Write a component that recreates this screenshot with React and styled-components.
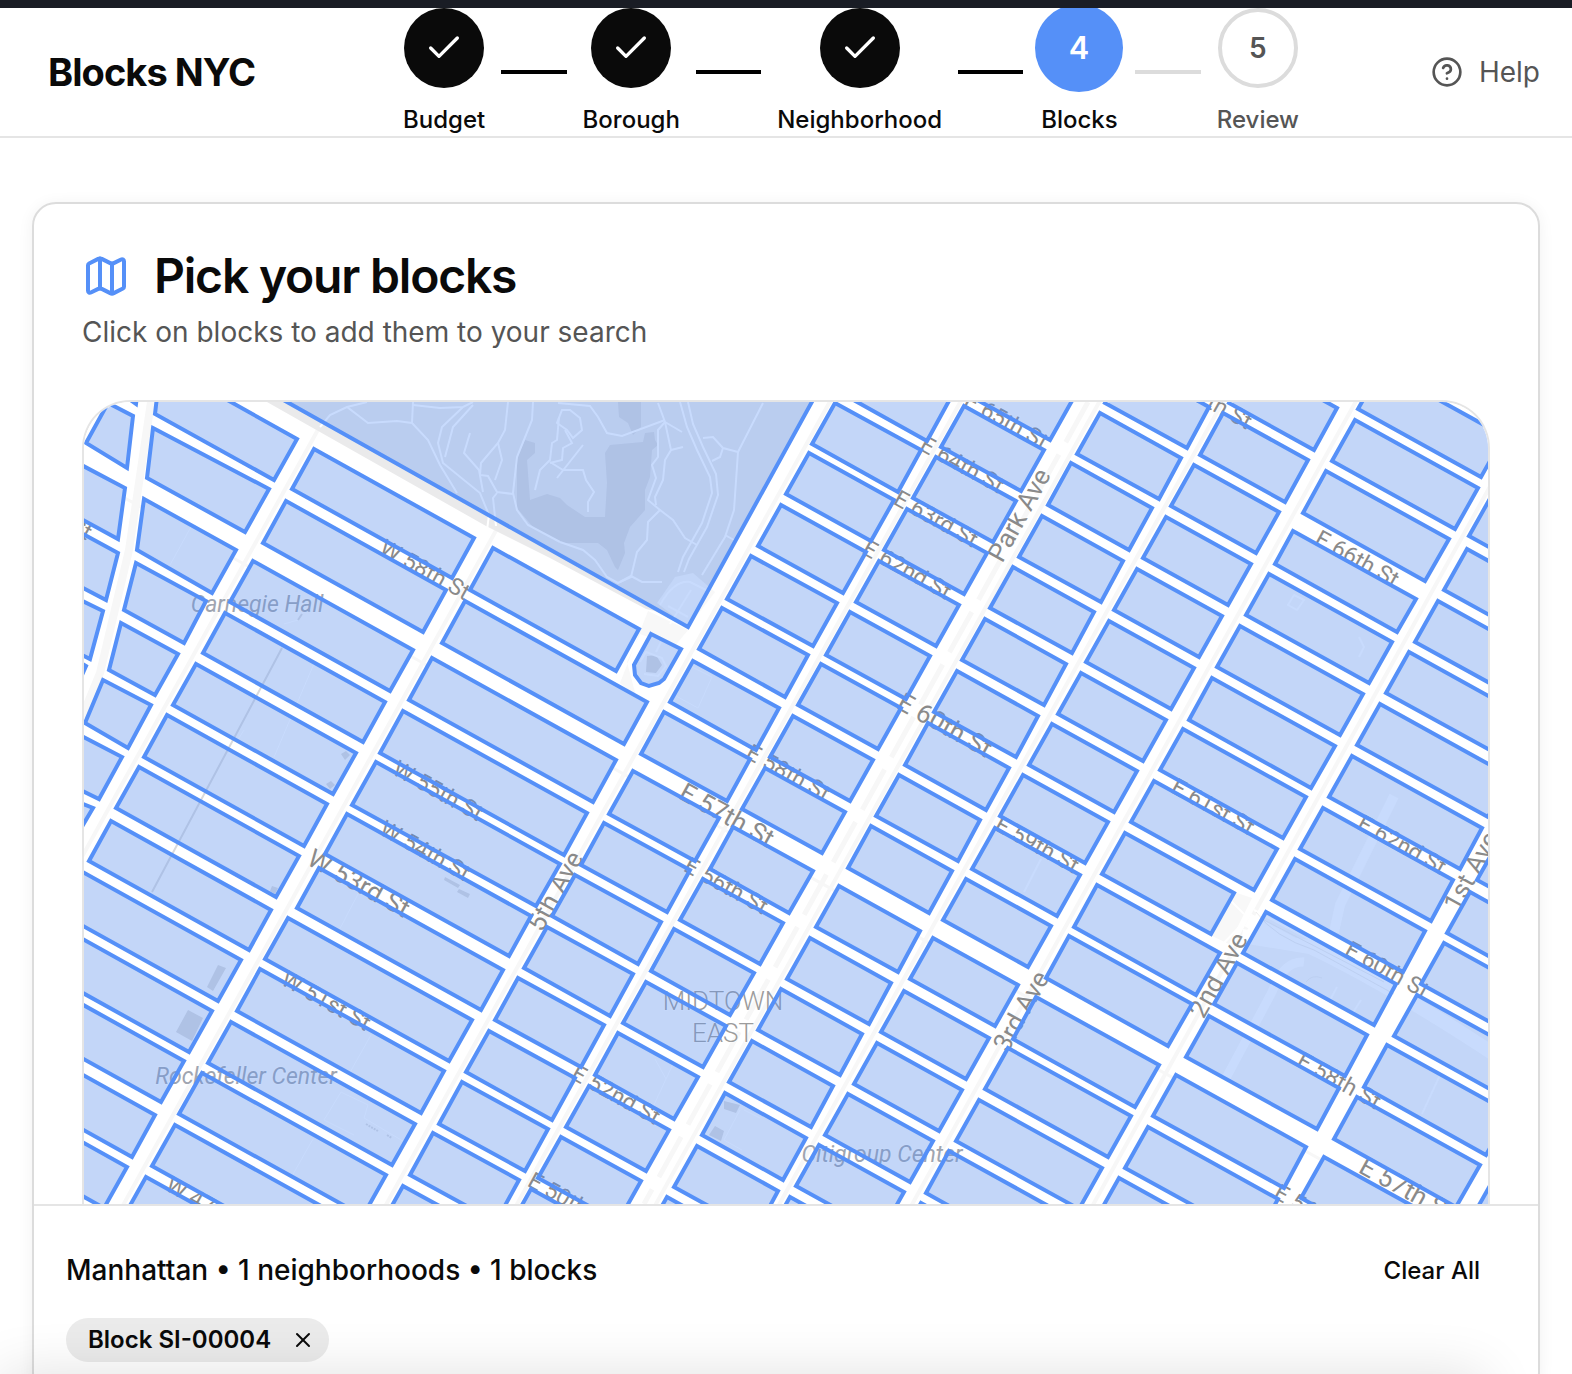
import React, { useState } from "react";
import styled, { createGlobalStyle } from "styled-components";
import { Check, CircleHelp, Map as MapIcon, X } from "lucide-react";

const color = {
  ink: "#0a0a0a",
  muted: "#555555",
  blue: "#5590f8",
  line: "#e5e5e5",
  edge: "#dcdcdc",
  chip: "#ebebeb",
};

const GlobalStyle = createGlobalStyle`
  *, *::before, *::after { box-sizing: border-box; }
  body {
    margin: 0;
    background: #fff;
    color: ${color.ink};
    font-family: Inter, "Liberation Sans", sans-serif;
    -webkit-font-smoothing: antialiased;
  }
  button { font: inherit; color: inherit; border: 0; background: none; cursor: pointer; }
`;

const Page = styled.div`
  height: 100vh;
  overflow: hidden;
  border-top: 8px solid #1a1d25;
`;

const Header = styled.header`
  display: flex;
  align-items: center;
  justify-content: space-between;
  height: 130px;
  padding: 0 32px;
  overflow: hidden;
  border-bottom: 2px solid ${color.line};
`;

const Brand = styled.a`
  padding: 0 16px;
  color: inherit;
  font-size: 38px;
  font-weight: 700;
  line-height: 48px;
  letter-spacing: -0.025em;
  text-decoration: none;
  white-space: nowrap;
`;

const Stepper = styled.ol`
  display: flex;
  align-items: center;
  gap: 16px;
  width: 896px;
  margin: 0;
  padding: 0;
  list-style: none;
`;

const StepItem = styled.li`
  display: flex;
  flex-direction: column;
  align-items: center;
  gap: 16px;
  color: ${(p) => (p.$state === "todo" ? color.muted : color.ink)};
`;

const StepDot = styled.span`
  display: grid;
  place-items: center;
  width: 80px;
  height: 80px;
  border-radius: 50%;
  border: ${(p) => (p.$state === "todo" ? `4px solid ${color.edge}` : "0")};
  background: ${(p) => ({ done: color.ink, current: color.blue, todo: "#fff" })[p.$state]};
  color: ${(p) => (p.$state === "todo" ? color.muted : "#fff")};
  transform: ${(p) => (p.$state === "current" ? "scale(1.1)" : "none")};
  font-size: 28px;
  font-weight: 600;
`;

const StepLabel = styled.span`
  font-size: 24px;
  font-weight: 500;
  line-height: 32px;
`;

const Connector = styled.li`
  flex: 1;
  height: 4px;
  background: ${(p) => (p.$done ? "#000" : color.edge)};
`;

const HelpButton = styled.button`
  display: flex;
  align-items: center;
  gap: 16px;
  padding: 0;
  color: ${color.muted};
  font-size: 28px;
  line-height: 40px;
`;

const Main = styled.main`
  padding: 64px 32px;
`;

const Card = styled.section`
  border: 2px solid ${color.edge};
  border-radius: 24px;
  background: #fff;
  box-shadow: 0 2px 16px rgba(0, 0, 0, 0.06);
`;

const CardBody = styled.div`
  padding: 48px 48px 0;
`;

const TitleRow = styled.div`
  display: flex;
  align-items: center;
  gap: 24px;
  svg { color: ${color.blue}; }
`;

const Title = styled.h1`
  margin: 0;
  font-size: 48px;
  font-weight: 600;
  line-height: 48px;
  letter-spacing: -0.025em;
`;

const Subtitle = styled.p`
  margin: 12px 0 48px;
  color: ${color.muted};
  font-size: 28px;
  line-height: 40px;
`;

const MapFrame = styled.div`
  overflow: hidden;
  border: 2px solid ${color.line};
  border-bottom: 0;
  border-radius: 48px 48px 0 0;
`;

const MapSvg = styled.svg`
  display: block;
  width: 100%;
  aspect-ratio: 1404 / 802;
`;

const MapLabel = styled.text`
  font-family: Roboto, "Liberation Sans", sans-serif;
  font-size: ${(p) => p.$size || 23}px;
  font-style: ${(p) => (p.$place ? "italic" : "normal")};
  font-weight: ${(p) => (p.$area ? 300 : 400)};
  fill: ${(p) => (p.$area ? "#9c9c9c" : p.$place ? "#a0a5b0" : "#8a8a8a")};
  stroke: rgba(255, 255, 255, 0.5);
  stroke-width: 2px;
  paint-order: stroke;
  text-anchor: middle;
  dominant-baseline: central;
`;

const Summary = styled.footer`
  display: flex;
  flex-direction: column;
  gap: 16px;
  padding: 32px;
  border-top: 2px solid ${color.line};
`;

const SummaryRow = styled.div`
  display: flex;
  align-items: center;
  justify-content: space-between;
  height: 64px;
`;

const SummaryText = styled.p`
  margin: 0;
  font-size: 28px;
  font-weight: 500;
  line-height: 40px;
`;

const ClearButton = styled.button`
  height: 64px;
  padding: 0 26px;
  font-size: 24px;
  font-weight: 500;
`;

const ChipList = styled.div`
  display: flex;
  gap: 16px;
  min-height: 44px;
`;

const Chip = styled.span`
  display: inline-flex;
  align-items: center;
  gap: 20px;
  height: 44px;
  padding: 0 14px 0 22px;
  border-radius: 22px;
  background: ${color.chip};
  font-size: 24px;
  font-weight: 600;
  line-height: 32px;
`;

const ChipRemove = styled.button`
  display: grid;
  place-items: center;
  padding: 0;
`;

const BottomBar = styled.div`
  position: fixed;
  top: 100%;
  left: 0;
  right: 88px;
  height: 96px;
  box-shadow: 0 0 56px rgba(0, 0, 0, 0.12);
  pointer-events: none;
`;

/* City blocks: each column lies between two avenues; a row is the block's
   northern corner with its depth, and a width where it differs. */
const COS = Math.cos((28.93 * Math.PI) / 180);
const SIN = Math.sin((28.93 * Math.PI) / 180);

const COLUMNS = [
  { width: 183, rows: [[230, 47, 46], [202, 99, 48], [169, 159], [141, 211, 46], [112, 262], [83, 313, 48], [55, 365], [27, 419, 46], [-3, 469], [-32, 520], [-60, 570], [-89, 624, 48], [-117, 676]] },
  { width: 210, rows: [[409, 146, 48, 167], [381, 199, 48, 208], [348, 256, 48], [319, 309, 48], [292, 360, 49], [263, 412, 46], [235, 466, 46], [204, 516], [176, 567, 48], [147, 620], [118, 671], [91, 723], [62, 775]] },
  { width: 98, rows: [[780, -50], [751, 1], [725, 51, 47, 97], [697, 103, 47, 97], [667, 154, 49], [638, 206], [609, 259], [580, 310, 48], [549, 369, 49], [520, 421, 48], [491, 473], [463, 525], [434, 576, 48], [405, 629], [378, 680, 48], [349, 731, 48], [319, 784]] },
  { width: 91, rows: [[909, -47], [880, 4], [852, 55], [823, 107], [795, 159], [766, 210, 49], [737, 262], [709, 314], [681, 366], [649, 425, 48], [619, 477], [590, 527, 48], [562, 580], [534, 631, 48], [505, 684], [477, 735], [447, 787]] },
  { width: 93, rows: [[1044, -40], [1016, 11], [987, 61, 48], [958, 114], [929, 165], [901, 217], [873, 269], [844, 321, 48], [815, 373], [787, 424, 48], [755, 484], [726, 536], [697, 587], [668, 639], [641, 691, 48], [613, 744], [583, 795]] },
  { width: 97, rows: [[1168, -41, 48], [1139, 11, 48], [1110, 63], [1082, 115], [1053, 167], [1025, 219], [997, 271], [968, 322], [939, 373], [911, 426], [882, 477], [849, 536], [820, 589], [793, 641], [764, 692], [735, 743], [706, 795]] },
  { width: 140, rows: [[1297, -34], [1271, 18], [1242, 69, 48], [1209, 129, 38], [1185, 172], [1156, 224], [1128, 276, 48], [1099, 327], [1070, 379], [1041, 431, 47, 124], [1013, 483, 48], [985, 534, 48], [952, 595, 48], [924, 646], [895, 698], [865, 749, 48], [837, 801]] },
  { width: 149, rows: [[1408, 93], [1383, 147], [1354, 199], [1325, 250], [1296, 302], [1268, 354], [1239, 406], [1211, 457], [1182, 510], [1153, 561], [1125, 614], [1092, 673], [1064, 725], [1035, 776]] },
  { width: 140, rows: [[1416, 437], [1386, 490], [1360, 541], [1333, 593], [1303, 643, 48], [1273, 695, 48], [1240, 755], [1413, 771]] },
];

const EDGE_BLOCKS = [
  "73,-5 138,-5 213,37 190,78 71,12",
  "69,26 185,87 161,130 63,76",
  "60,97 152,148 128,191 53,148",
  "52,161 122,199 100,241 40,208",
  "37,221 94,252 71,293 25,268",
  "19,278 67,303 44,346 1,321",
  "-14,328 38,355 15,397 -14,383",
  "-11,398 9,406 -1,423 -11,418",
  "24,1 49,14 43,66 2,41",
  "-14,57 41,86 34,137 -14,111",
  "-14,125 34,151 22,198 -14,179",
  "-14,193 19,209 6,257 -14,247",
  "-14,255 2,264 -6,282 -14,280",
  "30,-14 54,-14 52,2",
  "203,0 180,-13 735,-13 604,225",
  "567,232 597,247 580,277 575,281 565,284 557,281 551,273 550,263",
];

const blockPoints = (x, y, depth, width) => {
  const wx = width * COS;
  const wy = width * SIN;
  const dx = -depth * SIN;
  const dy = depth * COS;
  return [[x, y], [x + wx, y + wy], [x + wx + dx, y + wy + dy], [x + dx, y + dy]]
    .map((pt) => pt.map((n) => Math.round(n)).join(","))
    .join(" ");
};

const BLOCKS = [
  ...COLUMNS.flatMap((col) =>
    col.rows.map(([x, y, depth = 47, width = col.width]) => blockPoints(x, y, depth, width))
  ),
  ...EDGE_BLOCKS,
];

const STREETS = [
  ["W 58th St", 341, 168], ["E 65th St", 922, 19], ["E 64th St", 878, 63], ["E 63rd St", 852, 117],
  ["E 62nd St", 823, 168], ["E 67th St", 1126, -1], ["E 66th St", 1273, 157], ["E 61st St", 1129, 405],
  ["E 62nd St", 1318, 443], ["E 60th St", 1303, 568], ["E 58th St", 1255, 679], ["E 57th St", 1323, 787, 26],
  ["E 56th St", 1232, 811], ["E 59th St", 953, 443], ["E 60th St", 861, 323, 26], ["E 58th St", 704, 371],
  ["E 57th St", 643, 413, 26], ["E 56th St", 642, 484], ["E 52nd St", 532, 693], ["E 50th St", 486, 799],
  ["W 55th St", 354, 389], ["W 54th St", 341, 449], ["W 53rd St", 275, 481, 26], ["W 51st St", 242, 599],
  ["W 47th St", 127, 805], ["W 56th St", -37, 108],
];

const AVENUES = [
  ["Park Ave", 935, 113], ["5th Ave", 471, 489], ["3rd Ave", 937, 609], ["2nd Ave", 1134, 573], ["1st Ave", 1387, 469],
];

const PARK_PATHS = [
  "M596,0 L603,25 613,48 626,75 628,91 618,121 599,155 594,170",
  "M604,0 L609,22 619,45 632,72 634,93 623,125 605,157 600,170",
  "M574,1 L581,20 574,28 574,55 568,63 572,76 564,98 576,108 564,120 563,138 553,150 547,175 536,180",
  "M581,20 L587,48 581,58 579,78 571,95 572,103",
  "M576,108 L589,118 601,136 613,143",
  "M581,20 L598,30",
  "M587,48 L599,45 M619,36 L629,35 639,46 654,50",
  "M679,1 L654,50 650,108 641,135 618,173",
  "M639,46 L636,55 628,59 M641,133 L650,138",
  "M476,140 L499,148 511,158 523,175 534,181 547,174 558,180 578,180",
  "M474,1 L506,4 514,15 523,31 538,34 581,18",
  "M466,60 L479,68 499,68 502,78 510,90 504,100 504,110",
  "M473,76 L499,43",
  "M478,8 L486,8 496,16 498,28 489,36 483,28 473,21 Z",
  "M481,28 L488,41 479,46 478,58 466,61",
  "M236,25 L246,13 263,5 284,21 313,19 328,21 344,38 356,63 373,91",
  "M328,21 L329,0 M263,5 L283,0",
  "M329,3 L356,6 379,5 389,0",
  "M379,5 L358,25 354,41 359,61 396,91 405,113 403,128",
  "M389,3 L369,25 361,55",
  "M386,31 L380,51 395,68 399,90",
  "M424,0 L421,28 414,41 397,61 396,73 404,74 413,90 429,92",
  "M414,41 L418,58 411,78",
  "M413,91 L409,96 412,124",
  "M449,0 L448,18 433,55 429,91 433,108 444,123 476,140",
  "M475,15 L473,38 468,41 466,58 456,68 451,88",
];

function ManhattanMap() {
  return (
    <MapSvg viewBox="0 0 1404 802" preserveAspectRatio="xMidYMid slice" role="img" aria-label="Map of Midtown Manhattan blocks">
      <rect width="1404" height="802" fill="#fff" />
      <g fill="none" stroke="#f7f7f7" strokeWidth="4">
        {COLUMNS.slice(0, 8).map(({ rows: [[x, y]] }, i) => (
          <line key={i} x1={x - 5 + 0.5527 * (y + 20)} y1={-23} x2={x - 5 - 0.5527 * (900 - y)} y2={897} />
        ))}
        <path d="M67,0 L45,148 16,271 -2,315" strokeWidth="8" />
        <path d="M1004,0 L560,802" strokeWidth="5" strokeDasharray="46 14" />
        <path d="M-10,68 L1404,850" strokeWidth="3" />
      </g>
      <g fill="#f8f8f8">
        {BLOCKS.map((points) => <polygon key={points} points={points} />)}
        <polygon points="1150,490 1168,496 1145,542 1128,534" />
        <polygon points="564,209 604,228 590,245 556,232 543,260 552,294 536,281" />
      </g>
      <polygon points="183,0 402,124 466,156 562,207 571,209 604,225 728,0" fill="#eaeaeb" />
      <polygon points="573,201 591,175 609,171 631,190 604,225" fill="#f8f8f8" />
      <g fill="#dadadc">
        <path d="M441,38 L451,41 451,51 443,58 446,98 463,92 476,96 483,103 501,115 521,115 523,81 521,51 526,43 559,40 561,31 570,30 571,38 574,43 568,48 566,75 561,88 561,108 546,125 540,141 541,151 534,168 531,165 523,148 514,141 479,141 466,135 449,125 433,106 433,55 Z" />
        <path d="M534,0 L557,0 557,25 549,33 544,21 535,15 Z" />
        <path d="M563,254 L572,253 578,263 572,271 562,270 Z" />
        <path d="M134,563 L142,566 129,589 123,585 Z M104,608 L119,616 108,639 92,630 Z" />
        <path d="M257,352 L262,349 266,353 261,358 Z M242,382 L247,379 251,383 246,387 Z M188,484 L194,486 191,492 186,489 Z" />
        <path d="M361,475 L376,483 374,486 360,478 Z M375,487 L386,492 384,496 373,490 Z" />
        <path d="M640,699 L656,703 652,711 640,707 Z M631,724 L640,729 637,739 625,733 Z" />
      </g>
      <g fill="none" stroke="#fff" strokeWidth="2">
        {PARK_PATHS.map((d) => <path key={d} d={d} />)}
        <path d="M576,203 Q590,178 606,180 L626,190 M586,222 L607,188 M584,204 L604,215" />
        <path d="M556,260 L562,250 578,256 582,264 574,274 560,272 M572,250 L577,240" />
        <path d="M108,123 L86,163 M214,218 L200,222 M235,250 L190,355 M160,328 L145,352" strokeWidth="1" />
        <path d="M604,263 L628,275 614,306 592,294" strokeWidth="1" />
        <path d="M274,492 L250,538 M287,633 L265,672 M229,737 L208,774 M257,690 L284,703 280,716 324,742 M257,690 L240,718 270,733" strokeWidth="1" />
        <path d="M571,657 L582,677 569,705 M582,677 L590,660 M656,708 L640,738 658,748 M660,708 L676,716" strokeWidth="1" />
        <path d="M1210,193 L1220,198 1213,208 1204,203 Z M1275,235 L1280,245 1275,255" strokeWidth="2" />
        <path d="M1356,673 L1338,712 M1253,585 L1245,600 M1277,598 L1265,617" strokeWidth="2" />
        <path d="M957,457 L940,490" strokeWidth="2" />
        <path d="M1310,394 L1256,503 1250,530" strokeWidth="10" />
        <path d="M1164,518 L1210,543 M1158,534 L1226,545 Q1300,580 1410,652" strokeWidth="14" />
        <path d="M1220,560 Q1200,558 1188,590 L1142,676" strokeWidth="9" />
        <path d="M1170,508 L1240,545 1404,620 M1160,520 L1136,545 M1146,498 L1160,512" strokeWidth="2" />
      </g>
      <g fill="none" stroke="#dadadc" strokeWidth="2">
        <path d="M218,212 L214,218 M198,246 L68,490" />
        <path d="M282,722 L294,729 M303,733 L308,736" strokeDasharray="2 1" />
      </g>
      <g fill="none" stroke="#eeeeee" strokeWidth="1">
        <path d="M1172,510 Q1190,535 1230,548 L1310,592 M1180,518 L1300,580 M1222,580 Q1228,572 1238,576" />
      </g>

      {STREETS.map(([name, x, y, size]) => (
        <MapLabel key={name + x} $size={size} transform={`translate(${x} ${y}) rotate(29)`}>{name}</MapLabel>
      ))}
      {AVENUES.map(([name, x, y]) => (
        <MapLabel key={name} $size={26} transform={`translate(${x} ${y}) rotate(-61)`}>{name}</MapLabel>
      ))}
      <MapLabel $place x="173" y="202">Carnegie Hall</MapLabel>
      <MapLabel $place x="162" y="674">Rockefeller Center</MapLabel>
      <MapLabel $place x="798" y="752">Citigroup Center</MapLabel>
      <MapLabel $area $size={26} x="639" y="599">MIDTOWN</MapLabel>
      <MapLabel $area $size={26} x="639" y="631">EAST</MapLabel>

      <g fill={color.blue} fillOpacity="0.32" stroke={color.blue} strokeWidth="4">
        {BLOCKS.map((points) => <polygon key={points} points={points} />)}
      </g>
    </MapSvg>
  );
}

const STEPS = [
  { label: "Budget", state: "done" },
  { label: "Borough", state: "done" },
  { label: "Neighborhood", state: "done" },
  { label: "Blocks", state: "current" },
  { label: "Review", state: "todo" },
];

export default function App() {
  const [blocks, setBlocks] = useState(["SI-00004"]);

  return (
    <>
      <GlobalStyle />
      <Page>
        <Header>
          <Brand href="#">Blocks NYC</Brand>
          <Stepper>
            {STEPS.map(({ label, state }, i) => (
              <React.Fragment key={label}>
                {i > 0 && <Connector aria-hidden="true" $done={state !== "todo"} />}
                <StepItem $state={state} aria-current={state === "current" ? "step" : undefined}>
                  <StepDot $state={state}>{state === "done" ? <Check size={40} /> : i + 1}</StepDot>
                  <StepLabel>{label}</StepLabel>
                </StepItem>
              </React.Fragment>
            ))}
          </Stepper>
          <HelpButton type="button">
            <CircleHelp size={32} />
            Help
          </HelpButton>
        </Header>
        <Main>
          <Card>
            <CardBody>
              <TitleRow>
                <MapIcon size={48} />
                <Title>Pick your blocks</Title>
              </TitleRow>
              <Subtitle>Click on blocks to add them to your search</Subtitle>
              <MapFrame>
                <ManhattanMap />
              </MapFrame>
            </CardBody>
            <Summary>
              <SummaryRow>
                <SummaryText>Manhattan • 1 neighborhoods • {blocks.length} blocks</SummaryText>
                <ClearButton type="button" onClick={() => setBlocks([])}>Clear All</ClearButton>
              </SummaryRow>
              <ChipList>
                {blocks.map((id) => (
                  <Chip key={id}>
                    Block {id}
                    <ChipRemove
                      type="button"
                      aria-label={`Remove block ${id}`}
                      onClick={() => setBlocks(blocks.filter((b) => b !== id))}
                    >
                      <X size={24} />
                    </ChipRemove>
                  </Chip>
                ))}
              </ChipList>
            </Summary>
          </Card>
        </Main>
        <BottomBar />
      </Page>
    </>
  );
}
